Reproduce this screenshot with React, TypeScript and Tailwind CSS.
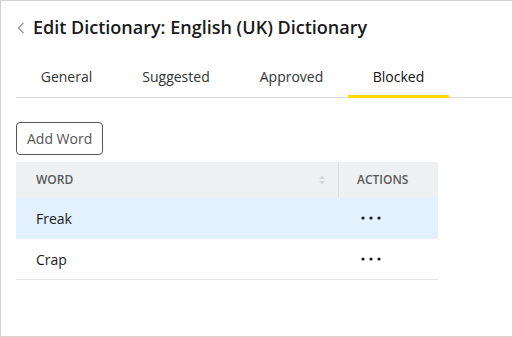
import React from "react";

const Dots = () => (
  <svg width="20" height="4" viewBox="0 0 20 4" className="block">
    <circle cx="2" cy="2" r="1.6" fill="#1a1a1a" />
    <circle cx="10" cy="2" r="1.6" fill="#1a1a1a" />
    <circle cx="18" cy="2" r="1.6" fill="#1a1a1a" />
  </svg>
);

export default function App() {
  const tabs = [
    { t: "General", w: "w-[101px]" },
    { t: "Suggested", w: "w-[118px]" },
    { t: "Approved", w: "w-[113px]" },
    { t: "Blocked", w: "w-[101px]" },
  ];
  const rows = [
    { w: "Freak", active: true },
    { w: "Crap", active: false },
  ];
  return (
    <div
      className="w-[513px] h-[337px] border border-[#d2d2d2] bg-white flex flex-col"
      style={{ fontFamily: '"Open Sans", sans-serif' }}
    >
      <div className="flex items-center h-[25px] mt-[14px] pl-[16px]">
        <svg width="8" height="12" viewBox="0 0 8 12" className="mr-[8px]">
          <path d="M6.5 0.8 L1.5 6 L6.5 11.2" stroke="#8a8a8a" strokeWidth="1.2" fill="none" />
        </svg>
        <span className="text-[18px] font-semibold text-[#1a1a1a]">
          Edit Dictionary: English (UK) Dictionary
        </span>
      </div>
      <div className="ml-[15px] mt-[20px] flex border-b border-[#dadada] h-[38px]">
        {tabs.map(({ t, w }) => (
          <div
            key={t}
            className={
              w +
              " text-[14px] flex justify-center items-start pt-[6px] " +
              (t === "Blocked"
                ? "text-[#111] font-medium border-b-[3px] border-[#ffdd00] -mb-px"
                : "text-[#333]")
            }
          >
            {t}
          </div>
        ))}
      </div>
      <div className="pl-[15px] pt-[24px]">
        <button className="h-[33px] px-[10px] border border-[#555] rounded-[4px] text-[14px] text-[#555] bg-white">
          Add Word
        </button>
      </div>
      <div className="ml-[15px] mt-[7px] w-[422px]">
        <div className="flex h-[35px] bg-[#eff0f2] text-[12px] font-semibold text-[#5a5a5a]">
          <div className="flex-1 flex items-center pl-[20px] pr-[12px] justify-between">
            <span>WORD</span>
            <svg width="8" height="10" viewBox="0 0 8 10">
              <path d="M1 4 L4 1 L7 4 Z" fill="#cfd1d4" />
              <path d="M1 6 L4 9 L7 6 Z" fill="#cfd1d4" />
            </svg>
          </div>
          <div className="w-px bg-[#dcdcdc]" />
          <div className="w-[99px] flex items-center pl-[18px]">ACTIONS</div>
        </div>
        {rows.map((r) => (
          <div
            key={r.w}
            className={
              "flex text-[14px] text-[#1a1a1a] " +
              (r.active ? "h-[42px] bg-[#e3f0fd]" : "h-[41px] border-b border-[#e4e4e4]")
            }
          >
            <div className="flex-1 flex items-center pl-[20px]">{r.w}</div>
            <div className="w-[100px] flex items-center pl-[23px]">
              <Dots />
            </div>
          </div>
        ))}
      </div>
    </div>
  );
}
